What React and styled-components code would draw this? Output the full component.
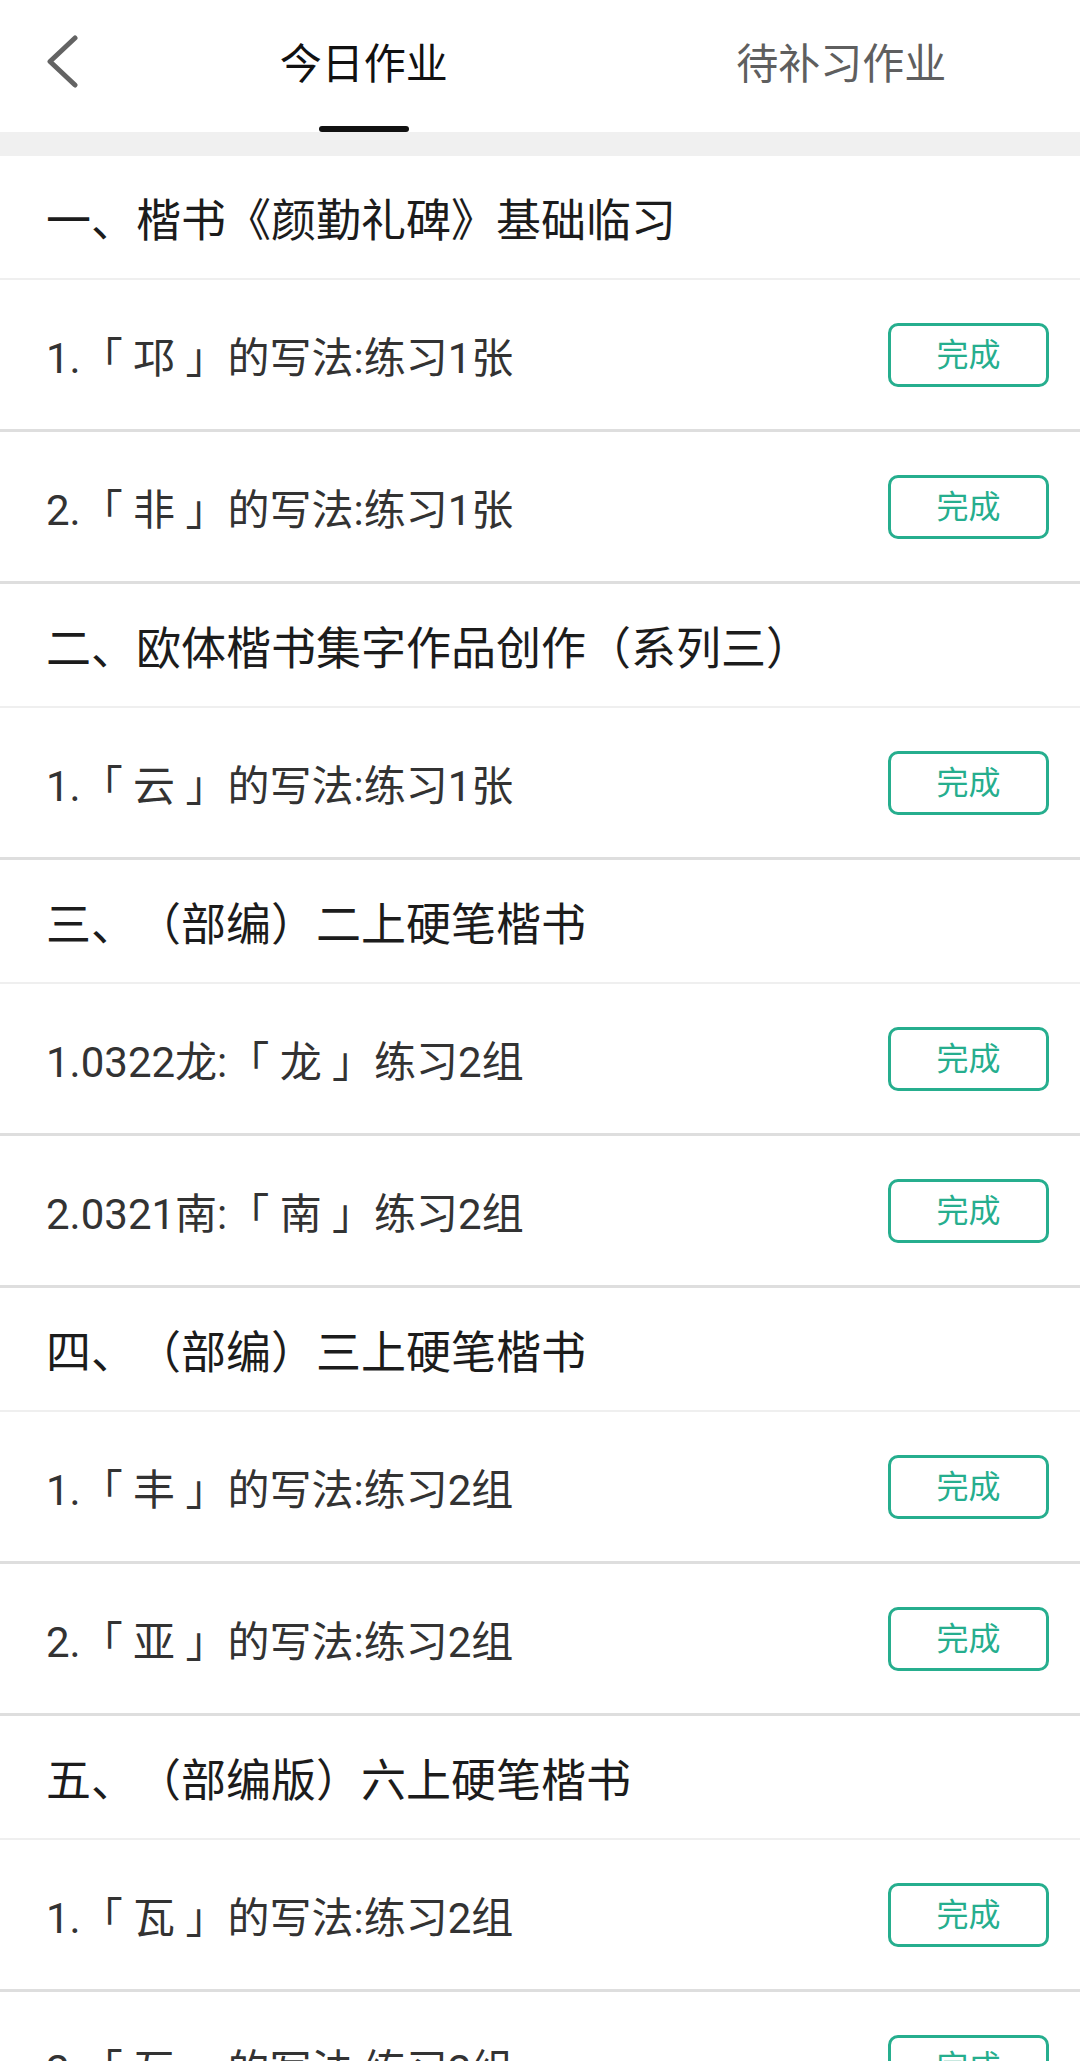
import React from "react";
import styled, { createGlobalStyle } from "styled-components";

const GlobalStyle = createGlobalStyle`
  html, body {
    margin: 0;
    padding: 0;
    background: #ffffff;
  }
  body {
    font-family: Roboto, "Noto Sans CJK SC", sans-serif;
    -webkit-font-smoothing: antialiased;
  }
  * { box-sizing: border-box; }
`;

const Page = styled.div`
  width: 1080px;
  background: #ffffff;
`;

const Header = styled.header`
  display: flex;
  height: 132px;
  background: #ffffff;
`;

const BackButton = styled.button`
  width: 125px;
  flex: none;
  border: 0;
  background: none;
  padding: 34px 0 0;
  display: flex;
  justify-content: center;
  align-items: flex-start;
  cursor: pointer;
`;

const Tab = styled.div`
  flex: 1;
  display: flex;
  flex-direction: column;
  align-items: center;
  padding-top: 44px;
`;

const TabLabel = styled.span`
  font-size: 42px;
  line-height: 42px;
  height: 42px;
  color: ${(p) => (p.$active ? "#111111" : "#5f5f5f")};
`;

const TabIndicator = styled.span`
  margin-top: auto;
  width: 90px;
  height: 6px;
  border-radius: 3px;
  background: ${(p) => (p.$active ? "#111111" : "transparent")};
`;

const Gap = styled.div`
  height: 24px;
  background: #f0f0f0;
`;

const SectionTitle = styled.div`
  height: 124px;
  display: flex;
  align-items: center;
  padding-left: 46px;
  font-size: 45px;
  color: #1c1c1c;
  border-bottom: 2px solid #efefef;
  white-space: nowrap;
  text-spacing-trim: space-all;
`;

const TaskRow = styled.div`
  height: 152px;
  display: flex;
  align-items: center;
  justify-content: space-between;
  padding: 0 31px 0 46px;
  border-bottom: 3px solid #dedede;
`;

const TaskText = styled.span`
  font-size: 42px;
  color: #333333;
  white-space: pre;
`;

const DoneButton = styled.button`
  width: 161px;
  height: 64px;
  border: 3px solid #26ae8e;
  border-radius: 10px;
  background: #ffffff;
  color: #26ae8e;
  font-family: Roboto, "Noto Sans CJK SC", sans-serif;
  font-size: 32px;
  line-height: 1;
  padding: 0;
  display: flex;
  align-items: center;
  justify-content: center;
`;

const sections = [
  {
    title: "一、楷书《颜勤礼碑》基础临习",
    items: ["1.「 邛 」的写法:练习1张", "2.「 非 」的写法:练习1张"],
  },
  {
    title: "二、欧体楷书集字作品创作（系列三）",
    items: ["1.「 云 」的写法:练习1张"],
  },
  {
    title: "三、（部编）二上硬笔楷书",
    items: ["1.0322龙:「 龙 」练习2组", "2.0321南:「 南 」练习2组"],
  },
  {
    title: "四、（部编）三上硬笔楷书",
    items: ["1.「 丰 」的写法:练习2组", "2.「 亚 」的写法:练习2组"],
  },
  {
    title: "五、（部编版）六上硬笔楷书",
    items: ["1.「 瓦 」的写法:练习2组", "2.「 互 」的写法:练习2组"],
  },
];

function BackIcon() {
  return (
    <svg width="34" height="54" viewBox="0 0 34 54" fill="none">
      <polyline
        points="29,4 4,27.5 29,51"
        stroke="#636363"
        strokeWidth="5"
        strokeLinecap="round"
        strokeLinejoin="round"
      />
    </svg>
  );
}

export default function App() {
  return (
    <Page>
      <GlobalStyle />
      <Header>
        <BackButton aria-label="返回">
          <BackIcon />
        </BackButton>
        <Tab>
          <TabLabel $active>今日作业</TabLabel>
          <TabIndicator $active />
        </Tab>
        <Tab>
          <TabLabel>待补习作业</TabLabel>
          <TabIndicator />
        </Tab>
      </Header>
      <Gap />
      {sections.map((s) => (
        <section key={s.title}>
          <SectionTitle>{s.title}</SectionTitle>
          {s.items.map((it) => (
            <TaskRow key={it}>
              <TaskText>{it}</TaskText>
              <DoneButton>完成</DoneButton>
            </TaskRow>
          ))}
        </section>
      ))}
    </Page>
  );
}
